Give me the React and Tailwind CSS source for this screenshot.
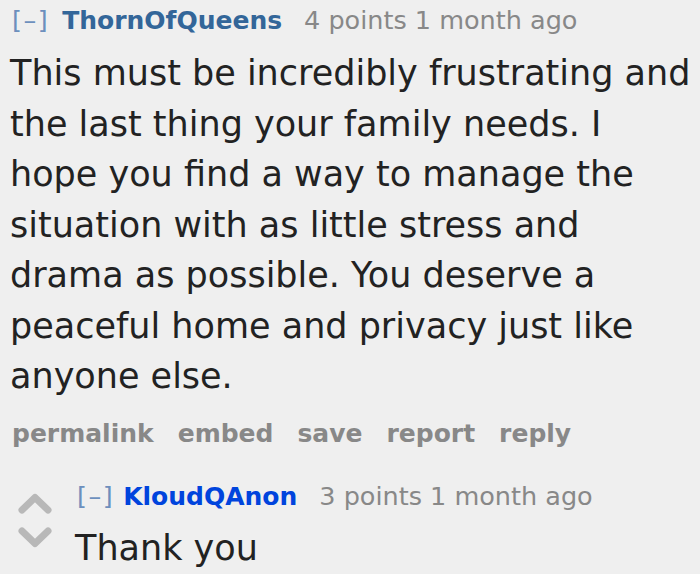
import React from 'react';

const body = 'This must be incredibly frustrating and the last thing your family needs. I hope you find a way to manage the situation with as little stress and drama as possible. You deserve a peaceful home and privacy just like anyone else.';

const Arrow = ({ down }) => (
    <svg width="36" height="24" viewBox="0 0 36 24" className={down ? 'rotate-180' : ''}>
        <path d="M5 19 L18 6.5 L31 19" fill="none" stroke="#b8b8b8" strokeWidth="7" strokeLinecap="round" strokeLinejoin="round" />
    </svg>
);

const App = () => {
    return (
        <div className="w-[700px] h-[574px] overflow-hidden bg-[#efefef] font-['DejaVu_Sans',Verdana,sans-serif]">
            <div className="pl-[10px] pt-[2px]">
                {/* parent comment */}
                <div className="flex items-baseline text-[25.5px] leading-[36px]">
                    <span className="text-[#6d8fbd] pl-[2px] tracking-[1.5px]">[–]</span>
                    <span className="ml-[13px] text-[25px] font-bold text-[#336699]">ThornOfQueens</span>
                    <span className="ml-[22px] text-[#888888]">4 points 1 month ago</span>
                </div>
                <p className="mt-[9px] text-[35px] leading-[50.5px] text-[#222222] pr-[4px]">{body}</p>
                <div className="mt-[14px] flex gap-[24px] text-[25px] leading-[36px] font-bold text-[#888888] pl-[2px]">
                    <span>permalink</span>
                    <span>embed</span>
                    <span>save</span>
                    <span>report</span>
                    <span>reply</span>
                </div>

                {/* child comment */}
                <div className="mt-[26px] flex">
                    <div className="w-[50px] flex flex-col items-center pt-[13px] gap-[11px]">
                        <Arrow />
                        <Arrow down />
                    </div>
                    <div className="ml-[17px]">
                        <div className="flex items-baseline text-[25.5px] leading-[36px]">
                            <span className="text-[#6d8fbd] tracking-[1.5px]">[–]</span>
                            <span className="ml-[9px] text-[25px] font-bold text-[#0044dd]">KloudQAnon</span>
                            <span className="ml-[22px] text-[#888888]">3 points 1 month ago</span>
                        </div>
                        <p className="mt-[8px] -ml-[2px] text-[35px] leading-[50px] text-[#222222]">Thank you</p>
                    </div>
                </div>
            </div>
        </div>
    );
};

export default App;
